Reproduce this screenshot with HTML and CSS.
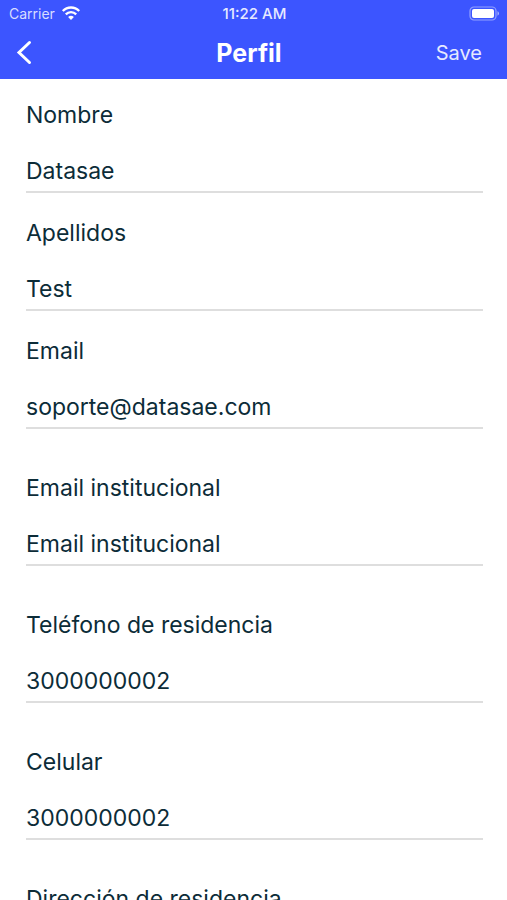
FILE: index.html
```html
<!DOCTYPE html>
<html lang="es">
<head>
  <meta charset="utf-8">
  <meta name="viewport" content="width=device-width, initial-scale=1">
  <title>Perfil</title>
  <link rel="stylesheet" href="styles.css">
</head>
<body>
  <header class="header">
    <div class="status">
      <div class="status-left">
        <span class="carrier">Carrier</span>
        <svg class="wifi" viewBox="0 0 20 15" width="20" height="15" aria-hidden="true">
          <path d="M1.8 5a11.4 11.4 0 0 1 16.4 0M4.8 8.4a7.2 7.2 0 0 1 10.4 0" fill="none" stroke="currentColor" stroke-width="2.3"/>
          <path d="M10 14 7.1 11.1a4.1 4.1 0 0 1 5.8 0z" fill="currentColor"/>
        </svg>
      </div>
      <time class="clock">11:22 AM</time>
      <svg class="battery" viewBox="0 0 32 15" width="32" height="15" aria-hidden="true">
        <rect x="2" y="1" width="26" height="13" rx="4" fill="none" stroke="currentColor" stroke-opacity=".45" stroke-width="1.2"/>
        <rect x="4" y="3" width="22" height="9" rx="2" fill="currentColor"/>
        <path d="M29.5 5.3v4.4c.9-.4 1.5-1.2 1.5-2.2s-.6-1.8-1.5-2.2z" fill="currentColor" fill-opacity=".55"/>
      </svg>
    </div>
    <nav class="nav">
      <button class="back" type="button" aria-label="Volver">
        <svg viewBox="0 0 16 26" width="16" height="26" aria-hidden="true">
          <path d="M13.5 2.5 3 12.5l10.5 10" fill="none" stroke="currentColor" stroke-width="3" stroke-linecap="round" stroke-linejoin="miter"/>
        </svg>
      </button>
      <h1 class="title">Perfil</h1>
      <button class="save" type="submit" form="profile">Save</button>
    </nav>
  </header>
  <main class="content">
    <form class="form" id="profile">
      <div class="field">
        <label for="nombre">Nombre</label>
        <input id="nombre" type="text" value="Datasae">
      </div>
      <div class="field">
        <label for="apellidos">Apellidos</label>
        <input id="apellidos" type="text" value="Test">
      </div>
      <div class="field">
        <label for="email">Email</label>
        <input id="email" type="email" value="soporte@datasae.com">
      </div>
      <div class="field field-spaced">
        <label for="institucional">Email institucional</label>
        <input id="institucional" type="text" value="Email institucional">
      </div>
      <div class="field field-spaced">
        <label for="telefono">Teléfono de residencia</label>
        <input id="telefono" type="tel" value="3000000002">
      </div>
      <div class="field field-spaced">
        <label for="celular">Celular</label>
        <input id="celular" type="tel" value="3000000002">
      </div>
      <div class="field field-spaced">
        <label for="direccion">Dirección de residencia</label>
        <input id="direccion" type="text">
      </div>
    </form>
  </main>
</body>
</html>
```
FILE: styles.css
```css
* {
  box-sizing: border-box;
}

body {
  margin: 0;
  height: 100vh;
  display: flex;
  flex-direction: column;
  background: #fff;
  color: #0c2c38;
  font-family: Inter, "Liberation Sans", sans-serif;
}

.header {
  flex: none;
  background: #3c55ff;
  color: #fff;
}

.status {
  display: grid;
  grid-template-columns: 1fr auto 1fr;
  align-items: center;
  height: 27px;
  padding: 0 7px 0 9px;
  font-size: 14px;
}

.status-left {
  display: flex;
  align-items: center;
  gap: 6px;
}

.carrier {
  color: #d8ddff;
}

.clock {
  color: #e6e9ff;
  font-size: 15px;
  font-weight: 500;
}

.battery {
  justify-self: end;
}

.nav {
  display: grid;
  grid-template-columns: 1fr auto 1fr;
  align-items: center;
  height: 52px;
  padding: 0 25px 0 16px;
}

.nav button {
  border: 0;
  padding: 0;
  background: none;
  color: inherit;
  font: inherit;
}

.nav .back {
  display: flex;
  justify-self: start;
}

.title {
  margin: 0;
  font-size: 25px;
  font-weight: 700;
}

.nav .save {
  justify-self: end;
  color: #e6e9ff;
  font-size: 20px;
}

.content {
  flex: 1;
  min-height: 0;
  overflow-y: auto;
  scrollbar-width: none;
}

.form {
  display: flex;
  flex-direction: column;
  gap: 25px;
  padding: 21px 24px 26px 26px;
}

.field {
  display: flex;
  flex-direction: column;
  gap: 21px;
  font-size: 23px;
  line-height: 30px;
}

.field-spaced {
  margin-top: 19px;
}

.field input {
  width: 100%;
  height: 42px;
  border: 0;
  border-bottom: 2px solid #dedede;
  border-radius: 0;
  padding: 0 0 1px;
  outline: 0;
  background: none;
  color: inherit;
  font: inherit;
}
```
